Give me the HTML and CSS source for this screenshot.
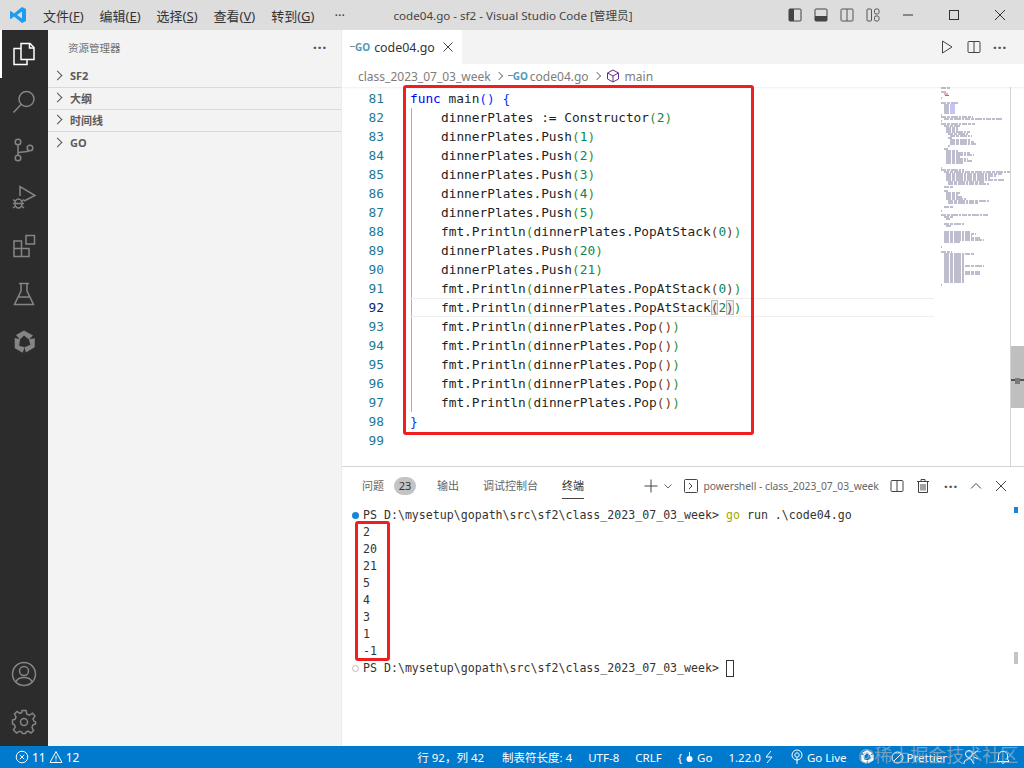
FILE: index.html
```html
<!DOCTYPE html>
<html lang="zh-CN">

<head>
    <meta charset="UTF-8">
    <title>code04.go - sf2 - Visual Studio Code</title>
    <link rel="stylesheet" href="styles.css">
</head>

<body>
    <header class="titlebar">
        <svg class="logo" width="18" height="18" viewBox="0 0 18 18">
            <path d="M13 1 L17 3 V15 L13 17 L5 10.500 L2 13 L1 12.400 V5.600 L2 5 L5 7.500Z M13 5.500 L8 9 L13 12.500Z" fill="#1f9cf0" fill-rule="evenodd"/>
        </svg>
        <nav class="menu">
            <span>文件(<u>F</u>)</span>
            <span>编辑(<u>E</u>)</span>
            <span>选择(<u>S</u>)</span>
            <span>查看(<u>V</u>)</span>
            <span>转到(<u>G</u>)</span>
            <span class="menu-more">···</span>
        </nav>
        <div class="title">code04.go - sf2 - Visual Studio Code [管理员]</div>
        <div class="layout-btns">
            <svg width="16" height="16" viewBox="0 0 16 16"><rect x="2" y="2" width="12" height="12" rx="1" fill="none" stroke="#444"/><rect x="2" y="2" width="5" height="12" fill="#444"/></svg>
            <svg width="16" height="16" viewBox="0 0 16 16"><rect x="2" y="2" width="12" height="12" rx="1" fill="none" stroke="#444"/><rect x="2" y="9" width="12" height="5" fill="#444"/></svg>
            <svg width="16" height="16" viewBox="0 0 16 16"><rect x="2" y="2" width="12" height="12" rx="1" fill="none" stroke="#555"/><path d="M8 2V14" stroke="#555"/></svg>
            <svg width="16" height="16" viewBox="0 0 16 16" fill="none" stroke="#555"><rect x="2" y="2" width="4.500" height="12" rx="1"/><rect x="9.500" y="2" width="4.500" height="5" rx="1.500"/><rect x="9.500" y="9" width="4.500" height="5" rx="1.500"/></svg>
        </div>
        <div class="win-btns">
            <svg width="46" height="30" viewBox="0 0 46 30"><path d="M18 15H28" stroke="#333"/></svg>
            <svg width="46" height="30" viewBox="0 0 46 30"><rect x="18.500" y="10.500" width="9" height="9" fill="none" stroke="#333"/></svg>
            <svg width="46" height="30" viewBox="0 0 46 30"><path d="M18 10L28 20M28 10L18 20" stroke="#333"/></svg>
        </div>
    </header>

    <div class="main">
        <aside class="activitybar">
            <div class="act-item active">
                <svg width="26" height="26" viewBox="0 0 26 26" fill="none" stroke="#fff" stroke-width="1.500"><path d="M10 2.500H19L23 6.500V18.500H10Z"/><path d="M18.500 2.500V7H23"/><path d="M10 7.500H3V23.500H16V18.500"/></svg>
            </div>
            <div class="act-item">
                <svg width="26" height="26" viewBox="0 0 26 26" fill="none" stroke="#858585" stroke-width="1.500"><circle cx="15.500" cy="10" r="7.500"/><path d="M10 15.500L2.500 23.500"/></svg>
            </div>
            <div class="act-item">
                <svg width="26" height="26" viewBox="0 0 26 26" fill="none" stroke="#858585" stroke-width="1.500"><circle cx="7" cy="5" r="2.800"/><circle cx="19" cy="11" r="2.800"/><circle cx="7" cy="21" r="2.800"/><path d="M7 8V18M7 16C8 14 16 16 18 13.500"/></svg>
            </div>
            <div class="act-item">
                <svg width="26" height="26" viewBox="0 0 26 26" fill="none" stroke="#858585" stroke-width="1.500"><path d="M9 11V1.500L24 10.500L13 16"/><ellipse cx="7.500" cy="18.500" rx="3.500" ry="4.500"/><path d="M4.500 18.500H10.500M2 14.500L4.500 16.500M2 18.500H4M2 23L4.500 21M13 14.500L10.500 16.500M13 18.500H11M13 23L10.500 21"/></svg>
            </div>
            <div class="act-item">
                <svg width="26" height="26" viewBox="0 0 26 26" fill="none" stroke="#858585" stroke-width="1.500"><path d="M3 8H10.500V23.500H3ZM3 15.500H18V23.500H10.500"/><rect x="15" y="2.500" width="8.500" height="8.500"/></svg>
            </div>
            <div class="act-item">
                <svg width="26" height="26" viewBox="0 0 26 26" fill="none" stroke="#858585" stroke-width="1.500"><path d="M8 2.500H18M10 2.500V10L3.500 23.500H22.500L16 10V2.500M7 16H19"/></svg>
            </div>
            <div class="act-item">
                <svg width="26" height="26" viewBox="0 0 26 26" fill="#858585"><path d="M5 6L13 1.500L22 6.500L18 10.500L13 6.500L9 10.500Z"/><path d="M5 6L13 1.500L22 6.500L18 10.500L13 6.500L9 10.500Z" transform="rotate(120 13.500 13)"/><path d="M5 6L13 1.500L22 6.500L18 10.500L13 6.500L9 10.500Z" transform="rotate(240 13.500 13)"/></svg>
            </div>
            <div class="act-spacer"></div>
            <div class="act-item">
                <svg width="26" height="26" viewBox="0 0 26 26" fill="none" stroke="#858585" stroke-width="1.500"><circle cx="13" cy="13" r="11.500"/><circle cx="13" cy="10" r="4.500"/><path d="M5 21C7 15 19 15 21 21"/></svg>
            </div>
            <div class="act-item">
                <svg width="26" height="26" viewBox="0 0 26 26" fill="none" stroke="#858585" stroke-width="1.500"><circle cx="13" cy="13" r="3.500"/><path d="M11 1.500H15L15.700 5L18.500 6.200L21.500 4.200L24 7L22 10L23 12L24.500 13V15L22 15.800L21 18.500L22.500 21.500L20 24L17 22.200L15 23L14.500 24.500H11.500L10.500 22.800L8.500 22.200L5.500 24L2.500 21L4.300 18L3.300 15.500L1.500 15V11L4 10.300L5 8L3.500 5L6 2.500L9 4.300L10.700 3.500Z"/></svg>
            </div>
        </aside>

        <aside class="sidebar">
            <div class="side-head">
                <span>资源管理器</span>
                <span class="dots">···</span>
            </div>
            <div class="side-row"><i class="chev"></i>SF2</div>
            <div class="side-row"><i class="chev"></i>大纲</div>
            <div class="side-row"><i class="chev"></i>时间线</div>
            <div class="side-row no-line"><i class="chev"></i>GO</div>
        </aside>

        <section class="workbench">
            <div class="tabs">
                <div class="tab">
                    <span class="go-icon">GO</span>
                    <span class="tab-name">code04.go</span>
                    <svg width="12" height="12" viewBox="0 0 12 12"><path d="M1.500 1.500L10.500 10.500M10.500 1.500L1.500 10.500" stroke="#444"/></svg>
                </div>
                <div class="tab-actions">
                    <svg width="16" height="16" viewBox="0 0 16 16"><path d="M3.500 2L13 8L3.500 14Z" fill="none" stroke="#444"/></svg>
                    <svg width="16" height="16" viewBox="0 0 16 16"><rect x="2" y="2.500" width="12" height="11" rx="1" fill="none" stroke="#444"/><path d="M8 2.500V13.500" stroke="#444"/></svg>
                    <span class="dots">···</span>
                </div>
            </div>
            <div class="breadcrumb">
                <span>class_2023_07_03_week</span>
                <i class="chev small"></i>
                <span class="go-icon crumb-go">GO</span>
                <span>code04.go</span>
                <i class="chev small"></i>
                <svg width="14" height="14" viewBox="0 0 14 14" fill="none" stroke="#652d90"><path d="M7 1L12.500 4V10L7 13L1.500 10V4Z"/><path d="M1.500 4L7 7L12.500 4M7 7V13"/></svg>
                <span>main</span>
            </div>

            <div class="editor">
                <div class="code-wrap">
                    <div class="gutter">
                        <div>81</div><div>82</div><div>83</div><div>84</div><div>85</div><div>86</div><div>87</div><div>88</div><div>89</div><div>90</div><div>91</div><div class="current">92</div><div>93</div><div>94</div><div>95</div><div>96</div><div>97</div><div>98</div><div>99</div>
                    </div>
                    <div class="code">
                        <div class="line"><span class="kw">func</span> main<span class="b1">()</span> <span class="b1">{</span></div>
                        <div class="line in">dinnerPlates := Constructor<span class="b2">(</span><span class="num">2</span><span class="b2">)</span></div>
                        <div class="line in">dinnerPlates.Push<span class="b2">(</span><span class="num">1</span><span class="b2">)</span></div>
                        <div class="line in">dinnerPlates.Push<span class="b2">(</span><span class="num">2</span><span class="b2">)</span></div>
                        <div class="line in">dinnerPlates.Push<span class="b2">(</span><span class="num">3</span><span class="b2">)</span></div>
                        <div class="line in">dinnerPlates.Push<span class="b2">(</span><span class="num">4</span><span class="b2">)</span></div>
                        <div class="line in">dinnerPlates.Push<span class="b2">(</span><span class="num">5</span><span class="b2">)</span></div>
                        <div class="line in">fmt.Println<span class="b2">(</span>dinnerPlates.PopAtStack<span class="b3">(</span><span class="num">0</span><span class="b3">)</span><span class="b2">)</span></div>
                        <div class="line in">dinnerPlates.Push<span class="b2">(</span><span class="num">20</span><span class="b2">)</span></div>
                        <div class="line in">dinnerPlates.Push<span class="b2">(</span><span class="num">21</span><span class="b2">)</span></div>
                        <div class="line in">fmt.Println<span class="b2">(</span>dinnerPlates.PopAtStack<span class="b3">(</span><span class="num">0</span><span class="b3">)</span><span class="b2">)</span></div>
                        <div class="line in current">fmt.Println<span class="b2">(</span>dinnerPlates.PopAtStack<span class="b3 match">(</span><span class="num">2</span><span class="b3 match">)</span><span class="b2">)</span></div>
                        <div class="line in">fmt.Println<span class="b2">(</span>dinnerPlates.Pop<span class="b3">()</span><span class="b2">)</span></div>
                        <div class="line in">fmt.Println<span class="b2">(</span>dinnerPlates.Pop<span class="b3">()</span><span class="b2">)</span></div>
                        <div class="line in">fmt.Println<span class="b2">(</span>dinnerPlates.Pop<span class="b3">()</span><span class="b2">)</span></div>
                        <div class="line in">fmt.Println<span class="b2">(</span>dinnerPlates.Pop<span class="b3">()</span><span class="b2">)</span></div>
                        <div class="line in">fmt.Println<span class="b2">(</span>dinnerPlates.Pop<span class="b3">()</span><span class="b2">)</span></div>
                        <div class="line"><span class="b1">}</span></div>
                        <div class="line"></div>
                    </div>
                </div>
                <svg class="minimap" width="70" height="379" viewBox="0 0 70 379">
                    <path fill="none" stroke="#7c7c9c" stroke-width="1" stroke-dasharray="5 1 3 1 7 1 2 1" d="M1 1H11M1 5H6M1 11H2M1 16H18M4 18H10M4 20H10M4 22H10M4 24H10M4 26H10M1 28H2M1 30H33M4 32H62M1 34H2M1 37H35M4 39H20M6 41H18M6 43H18M6 45H30M8 47H28M10 49H32M8 51H12M10 53H30M10 55H34M10 57H36M8 59H10M4 62H8M6 64H18M6 66H30M6 68H34M6 70H20M6 72H28M6 74H32M6 76H24M1 81H2M1 83H24M4 85H70M6 87H62M6 89H56M6 91H50M6 93H64M8 95H44M8 97H50M4 100H14M4 104H8M6 106H20M6 108H18M6 110H22M6 112H26M8 114H50M8 116H38M4 120H14M1 124H2M1 128H48M4 130H14M6 132H10M4 137H24M6 139H12M4 145H30M4 147H36M4 149H32M4 151H40M4 153H44M4 155H20M1 160H2M1 165H12M4 167H34M4 169H24M4 171H24M4 173H24M4 175H24M4 177H24M4 179H44M4 181H24M4 183H24M4 185H40M4 187H40M4 189H24M4 191H24M4 193H24M4 195H24M1 198H2"/>
                    <path d="M4 7H8M5 8.500H9" stroke="#d06060" stroke-width="1"/>
                    <path d="M10 18H15M10 20H15M10 22H15M10 24H15M10 26H15" stroke="#8a8ae6" stroke-width="1"/>
                </svg>
                <div class="scrollbar">
                    <div class="slider"><div class="cursor-mark"></div></div>
                </div>
                <div class="red-box code-box"></div>
            </div>

            <div class="panel">
                <div class="panel-tabs">
                    <span class="ptab">问题</span>
                    <span class="badge">23</span>
                    <span class="ptab">输出</span>
                    <span class="ptab">调试控制台</span>
                    <span class="ptab on">终端</span>
                    <div class="panel-actions">
                        <svg width="16" height="16" viewBox="0 0 16 16"><path d="M8 1.500V14.500M1.500 8H14.500" stroke="#444"/></svg>
                        <svg class="chev-down" width="10" height="10" viewBox="0 0 10 10"><path d="M1.500 3.500L5 7L8.500 3.500" fill="none" stroke="#666"/></svg>
                        <svg class="term-icon" width="14" height="14" viewBox="0 0 14 14" fill="none" stroke="#444"><rect x="0.500" y="0.500" width="13" height="13" rx="1"/><path d="M5 4L8 7L5 10"/></svg>
                        <span class="term-name">powershell - class_2023_07_03_week</span>
                        <svg class="gap-m" width="16" height="16" viewBox="0 0 16 16"><rect x="2" y="2.500" width="12" height="11" rx="1" fill="none" stroke="#444"/><path d="M8 2.500V13.500" stroke="#444"/></svg>
                        <svg class="gap-m" width="16" height="16" viewBox="0 0 16 16" fill="none" stroke="#444"><path d="M2 3.500H14M6 3.500V1.500H10V3.500M3.500 3.500V14.500H12.500V3.500M6 6V12.500M8 6V12.500M10 6V12.500"/></svg>
                        <span class="dots gap-l">···</span>
                        <svg class="gap-m" width="16" height="16" viewBox="0 0 16 16"><path d="M3 10.500L8 5.500L13 10.500" fill="none" stroke="#444"/></svg>
                        <svg class="gap-m" width="14" height="14" viewBox="0 0 14 14"><path d="M2 2L12 12M12 2L2 12" stroke="#444"/></svg>
                    </div>
                </div>
                <div class="terminal">
                    <div class="term-line"><i class="dot blue"></i>PS D:\mysetup\gopath\src\sf2\class_2023_07_03_week&gt; <span class="cmd">go</span> run .\code04.go</div>
                    <div class="term-line">2</div>
                    <div class="term-line">20</div>
                    <div class="term-line">21</div>
                    <div class="term-line">5</div>
                    <div class="term-line">4</div>
                    <div class="term-line">3</div>
                    <div class="term-line">1</div>
                    <div class="term-line">-1</div>
                    <div class="term-line"><i class="dot grey"></i>PS D:\mysetup\gopath\src\sf2\class_2023_07_03_week&gt; <i class="caret"></i></div>
                </div>
                <div class="term-mark blue-mark"></div>
                <div class="term-mark grey-mark"></div>
                <div class="red-box term-box"></div>
            </div>
        </section>
    </div>

    <footer class="statusbar">
        <div class="status-left">
            <svg width="14" height="14" viewBox="0 0 14 14" fill="none" stroke="#fff"><circle cx="7" cy="7" r="5.800"/><path d="M4.800 4.800L9.200 9.200M9.200 4.800L4.800 9.200"/></svg>
            <span>11</span>
            <svg width="14" height="14" viewBox="0 0 14 14" fill="none" stroke="#fff"><path d="M7 1.500L13 12.500H1Z"/><path d="M7 5.500V9.500M7 10.500V11.500"/></svg>
            <span>12</span>
        </div>
        <div class="status-right">
            <span class="pos">行 92，列 42</span>
            <span>制表符长度: 4</span>
            <span>UTF-8</span>
            <span>CRLF</span>
            <span class="status-icon"><b>{</b><svg width="9" height="12" viewBox="0 0 9 12"><path d="M4.500 1V6" stroke="#fff"/><circle cx="4.500" cy="8" r="3" fill="#fff"/></svg> Go</span>
            <span class="status-icon">1.22.0
                <svg width="10" height="14" viewBox="0 0 10 14" fill="none" stroke="#fff"><path d="M7 1L2 7H8L3 13"/></svg>
            </span>
            <span class="status-icon live">
                <svg width="14" height="16" viewBox="0 0 14 16" fill="none" stroke="#fff"><circle cx="7" cy="6" r="5"/><circle cx="7" cy="6" r="2.200"/><path d="M7 8.500V15"/></svg>
                Go Live
            </span>
            <svg class="swirl" width="16" height="16" viewBox="0 0 26 26" fill="#fff"><path d="M5 6L13 1.500L22 6.500L18 10.500L13 6.500L9 10.500Z"/><path d="M5 6L13 1.500L22 6.500L18 10.500L13 6.500L9 10.500Z" transform="rotate(120 13.500 13)"/><path d="M5 6L13 1.500L22 6.500L18 10.500L13 6.500L9 10.500Z" transform="rotate(240 13.500 13)"/></svg>
            <span class="status-icon">
                <svg width="13" height="13" viewBox="0 0 13 13" fill="none" stroke="#fff"><circle cx="6.500" cy="6.500" r="5.500"/><path d="M3 10L10 3"/></svg>
                Prettier
            </span>
            <svg width="16" height="16" viewBox="0 0 16 16" fill="none" stroke="#fff"><circle cx="6" cy="5" r="3.500"/><path d="M1 15C1 10 6 9 8 10L11 15M10 5L15 1.500M11 8L15 10"/></svg>
            <svg width="16" height="16" viewBox="0 0 16 16" fill="none" stroke="#fff"><path d="M2 12.500H14L12.500 10V6.500C12.500 1 3.500 1 3.500 6.500V10ZM6.500 12.500C6.500 15 9.500 15 9.500 12.500"/></svg>
        </div>
        <div class="watermark">@稀土掘金技术社区</div>
    </footer>
</body>

</html>
```

FILE: styles.css
```css
* {
    box-sizing: border-box;
}

body {
    margin: 0;
    width: 1024px;
    height: 768px;
    overflow: hidden;
    display: flex;
    flex-direction: column;
    font-family: "Noto Sans", "Noto Sans CJK SC", sans-serif;
    color: #444;
    background-color: #fff;
}

svg {
    display: block;
    flex: none;
}

/* 标题栏 */
.titlebar {
    display: flex;
    align-items: center;
    height: 30px;
    flex: none;
    background-color: #dddddd;
    position: relative;
    font-size: 12px;
    color: #333;
}

.logo {
    margin-left: 9px;
}

.menu {
    display: flex;
    margin-left: 16px;
    gap: 16px;
    font-size: 13px;
}

.menu u {
    text-underline-offset: 1px;
}

.menu-more {
    margin-left: 4px;
    letter-spacing: 0;
}

.title {
    position: absolute;
    left: 393px;
    width: 240px;
    text-align: center;
    white-space: nowrap;
    font-size: 11.600px;
    color: #444;
}

.layout-btns {
    display: flex;
    gap: 10px;
    margin-left: auto;
}

.win-btns {
    display: flex;
    margin-left: 4px;
    margin-right: 1px;
}

/* 活动栏 */
.main {
    display: flex;
    flex: 1;
    min-height: 0;
}

.activitybar {
    width: 48px;
    flex: none;
    display: flex;
    flex-direction: column;
    background-color: #2c2c2c;
}

.act-item {
    height: 48px;
    display: flex;
    align-items: center;
    justify-content: center;
    flex: none;
}

.act-item.active {
    border-left: 2px solid #fff;
    padding-right: 2px;
}

.act-spacer {
    flex: 1;
}

/* 侧边栏 */
.sidebar {
    width: 294px;
    flex: none;
    background-color: #f3f3f3;
    border-right: 1px solid #ececec;
}

.side-head {
    height: 36px;
    display: flex;
    align-items: center;
    justify-content: space-between;
    padding: 0 14px 2px 20px;
    font-size: 10.500px;
    color: #6f6f6f;
}

.dots {
    font-size: 15px;
    font-weight: bold;
    line-height: 1;
    letter-spacing: 0.500px;
    color: #555;
}

.side-row {
    height: 22px;
    display: flex;
    align-items: center;
    padding: 0 0 2px 6px;
    font-size: 11px;
    font-weight: 700;
    color: #5b5b5b;
    border-bottom: 1px solid #d9d9d9;
}

.side-row.no-line {
    border-bottom: none;
}

.chev {
    width: 7px;
    height: 7px;
    flex: none;
    margin-right: 9px;
    border-top: 1px solid #555;
    border-right: 1px solid #555;
    transform: rotate(45deg);
}

.chev.small {
    width: 6px;
    height: 6px;
    margin: 0 1px 0 0;
    border-color: #888;
}

/* 编辑器标签 */
.workbench {
    flex: 1;
    min-width: 0;
    display: flex;
    flex-direction: column;
}

.tabs {
    height: 34px;
    flex: none;
    display: flex;
    align-items: stretch;
    background-color: #f3f3f3;
}

.tab {
    width: 120px;
    display: flex;
    align-items: center;
    padding-left: 8px;
    background-color: #fff;
    font-size: 12.400px;
    color: #333;
}

.tab-name {
    margin: 0 7px 0 4px;
}

.go-icon {
    font-size: 10px;
    font-weight: 700;
    color: #519aba;
    padding-left: 5px;
    background: linear-gradient(#888, #888) 0 45% / 5px 1px no-repeat;
    line-height: 12px;
}

.crumb-go {
    margin-right: -3px;
}

.tab-actions {
    display: flex;
    align-items: center;
    gap: 11px;
    margin-left: auto;
    padding-right: 17px;
}

.breadcrumb {
    height: 23px;
    flex: none;
    display: flex;
    align-items: center;
    gap: 5px;
    padding: 1px 0 0 16px;
    font-size: 12px;
    color: #7d7d7d;
}

/* 代码区 */
.editor {
    height: 379px;
    flex: none;
    display: flex;
    position: relative;
    box-shadow: inset 0 3px 3px -3px #ddd;
}

.code-wrap {
    display: flex;
    flex: 1;
    min-width: 0;
    padding-top: 2px;
    margin-right: 6px;
}

.gutter {
    width: 42px;
    flex: none;
    text-align: right;
    color: #237893;
}

.gutter div,
.line {
    height: 19px;
    line-height: 19px;
    font-family: "DejaVu Sans Mono", monospace;
    font-size: 12.800px;
    white-space: pre;
}

.gutter .current {
    color: #0b216f;
}

.code {
    flex: 1;
    margin-left: 26px;
    color: #1f1f1f;
}

.line.in {
    padding-left: 31px;
    background: linear-gradient(#b0b0b0, #b0b0b0) 1px 0 / 1px 100% no-repeat;
}

.line.current {
    border-top: 1px solid #eeeeee;
    border-bottom: 1px solid #eeeeee;
    line-height: 17px;
}

.kw {
    color: #0000ff;
}

.b1 {
    color: #0431fa;
}

.b2 {
    color: #319331;
}

.b3 {
    color: #7b3814;
}

.num {
    color: #098658;
}

.match {
    background-color: #e8eee8;
    outline: 1px solid #b9b9b9;
    outline-offset: -1px;
}

.minimap {
    width: 70px;
    flex: none;
}

.scrollbar {
    width: 14px;
    flex: none;
    border-left: 1px solid #d4d4d4;
    position: relative;
    padding-top: 259px;
}

.slider {
    height: 62px;
    background-color: #bfbfbf;
    position: relative;
}

.cursor-mark {
    position: absolute;
    left: 0;
    right: 0;
    top: 33px;
    height: 2px;
    background-color: #555;
}

.cursor-mark::after {
    content: "";
    position: absolute;
    left: 4px;
    top: -1px;
    width: 5px;
    height: 6px;
    background-color: #7a7a7a;
}

.red-box {
    position: absolute;
    border: 3px solid #f01f1f;
    border-radius: 3px;
    pointer-events: none;
}

.code-box {
    left: 61px;
    top: -2px;
    width: 351px;
    height: 350px;
}

/* 面板 */
.panel {
    flex: 1;
    position: relative;
    border-top: 1px solid #d4d4d4;
}

.panel-tabs {
    height: 38px;
    display: flex;
    align-items: center;
    padding-left: 20px;
    font-size: 11px;
    color: #666;
}

.ptab {
    margin-right: 24px;
    line-height: 24px;
}

.ptab.on {
    color: #333;
    border-bottom: 1px solid #444;
    margin-top: 1px;
}

.badge {
    width: 22px;
    height: 18px;
    line-height: 18px;
    margin: 0 21px 0 -14px;
    text-align: center;
    border-radius: 9px;
    background-color: #c4c4c4;
    color: #333;
    font-size: 11px;
}

.panel-actions {
    display: flex;
    align-items: center;
    margin-left: auto;
    padding-right: 16px;
}

.chev-down {
    margin-left: 4px;
}

.term-icon {
    margin-left: 11px;
}

.term-name {
    margin-left: 5px;
    font-size: 10.300px;
    white-space: nowrap;
    color: #666;
}

.gap-l {
    margin-left: 13px;
}

.gap-m {
    margin-left: 10px;
}

.terminal {
    padding: 2px 0 0 21px;
}

.term-line {
    height: 17px;
    line-height: 17px;
    font-family: "DejaVu Sans Mono", monospace;
    font-size: 11.600px;
    white-space: pre;
    color: #333;
    position: relative;
}

.cmd {
    color: #a6a600;
}

.dot {
    position: absolute;
    left: -11px;
    top: 5px;
    width: 7px;
    height: 7px;
    border-radius: 50%;
}

.dot.blue {
    background-color: #1a85d6;
}

.dot.grey {
    border: 1px solid #bbb;
}

.caret {
    display: inline-block;
    width: 8px;
    height: 17px;
    border: 1px solid #333;
    vertical-align: top;
}

.term-mark {
    position: absolute;
    left: 672px;
    width: 4px;
}

.blue-mark {
    top: 40px;
    height: 6px;
    background-color: #1a85d6;
}

.grey-mark {
    top: 185px;
    height: 12px;
    background-color: #c4c4c4;
}

.term-box {
    left: 13px;
    top: 54px;
    width: 35px;
    height: 140px;
}

/* 状态栏 */
.statusbar {
    height: 22px;
    flex: none;
    display: flex;
    align-items: center;
    justify-content: space-between;
    padding-left: 15px;
    background-color: #007acc;
    color: #fff;
    font-size: 11.500px;
    position: relative;
}

.status-left {
    display: flex;
    align-items: center;
    gap: 3px;
    font-size: 12px;
}

.status-right {
    display: flex;
    align-items: center;
    gap: 16px;
    padding-right: 13px;
}

.pos {
    margin-right: 2px;
}

.status-icon {
    display: flex;
    align-items: center;
    gap: 3px;
}

.status-icon b {
    font-weight: 400;
}

.swirl {
    margin-left: -4px;
}

.watermark {
    position: absolute;
    left: 858px;
    top: -2px;
    font-size: 18px;
    line-height: 22px;
    white-space: nowrap;
    color: rgba(190, 190, 190, 0.6);
}
```
